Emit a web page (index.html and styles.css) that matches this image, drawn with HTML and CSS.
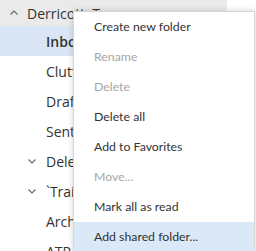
FILE: index.html
```html
<!DOCTYPE html>
<html lang="en">
<head>
    <meta charset="UTF-8">
    <title>Folders</title>
    <link rel="stylesheet" href="styles.css">
</head>
<body>
    <div class="folders">
        <div class="folder folder-account">
            <span class="chevron">
                <svg width="8" height="5" viewBox="0 0 8 5"><path d="M0.5 4.5 L4 1 L7.5 4.5" fill="none" stroke="#666" stroke-width="1.1"/></svg>
            </span>
            <span class="folder-name">Derricott, Tony</span>
        </div>
        <div class="folder folder-selected"><span class="folder-name bold">Inbox</span></div>
        <div class="folder"><span class="folder-name">Clutter</span></div>
        <div class="folder"><span class="folder-name">Drafts</span></div>
        <div class="folder"><span class="folder-name">Sent Items</span></div>
        <div class="folder folder-sub">
            <span class="chevron">
                <svg width="8" height="5" viewBox="0 0 8 5"><path d="M0.5 0.5 L4 4 L7.5 0.5" fill="none" stroke="#666" stroke-width="1.1"/></svg>
            </span>
            <span class="folder-name">Deleted Items</span>
        </div>
        <div class="folder folder-sub">
            <span class="chevron">
                <svg width="8" height="5" viewBox="0 0 8 5"><path d="M0.5 0.5 L4 4 L7.5 0.5" fill="none" stroke="#666" stroke-width="1.1"/></svg>
            </span>
            <span class="folder-name">`Training</span>
        </div>
        <div class="folder"><span class="folder-name">Archive</span></div>
        <div class="folder"><span class="folder-name">ATP</span></div>
    </div>

    <ul class="context-menu">
        <li class="menu-item">Create new folder</li>
        <li class="menu-item disabled">Rename</li>
        <li class="menu-item disabled">Delete</li>
        <li class="menu-item">Delete all</li>
        <li class="menu-item">Add to Favorites</li>
        <li class="menu-item disabled">Move...</li>
        <li class="menu-item">Mark all as read</li>
        <li class="menu-item hover">Add shared folder...</li>
    </ul>
</body>
</html>
```

FILE: styles.css
```css
* {
    margin: 0;
    padding: 0;
    box-sizing: border-box;
}

html {
    overflow: hidden;
}

body {
    font-family: "Open Sans", "Noto Sans", sans-serif;
    font-size: 13px;
    color: #333;
    background: #fff;
    width: 256px;
    height: 251px;
    overflow: hidden;
    position: relative;
}

.folders {
    width: 227px;
}

.folder {
    display: flex;
    align-items: center;
    height: 30px;
    padding-left: 46px;
    white-space: nowrap;
}

.folder-account {
    height: 26px;
    padding-left: 10px;
    background: #eaeaea;
}

.folder-account .chevron {
    margin-right: 9px;
    margin-top: -2px;
}

.folder-selected {
    background: #dae6f5;
}

.folder-sub {
    padding-left: 28px;
}

.folder-sub .chevron {
    margin-right: 10px;
}

.chevron {
    display: flex;
    width: 8px;
}

.folder-name {
    font-size: 14px;
    color: #333;
}

.bold {
    font-weight: 600;
}

.context-menu {
    position: absolute;
    left: 73px;
    top: 11px;
    width: 182px;
    height: 240px;
    overflow: hidden;
    list-style: none;
    background: #fff;
    border: 1px solid #d6d6d6;
    border-bottom: none;
    box-shadow: 0 0 6px rgba(0, 0, 0, 0.18);
    font-family: Lato, "Open Sans", sans-serif;
    font-size: 12.3px;
}

.menu-item {
    height: 30px;
    line-height: 30px;
    padding-left: 20px;
    color: #333;
    white-space: nowrap;
}

.menu-item.disabled {
    color: #a6a6a6;
}

.menu-item.hover {
    background: #dae8f7;
}
```
